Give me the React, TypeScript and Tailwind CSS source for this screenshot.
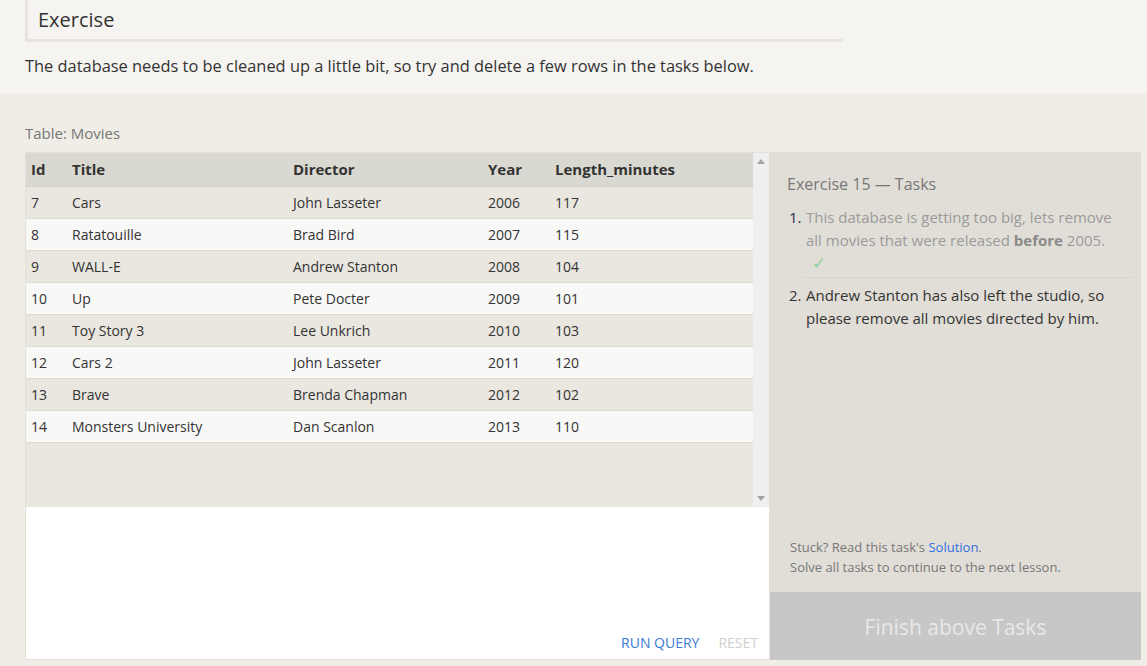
import React from "react";

const movies = [
  { id: 7, title: "Cars", director: "John Lasseter", year: 2006, len: 117 },
  { id: 8, title: "Ratatouille", director: "Brad Bird", year: 2007, len: 115 },
  { id: 9, title: "WALL-E", director: "Andrew Stanton", year: 2008, len: 104 },
  { id: 10, title: "Up", director: "Pete Docter", year: 2009, len: 101 },
  { id: 11, title: "Toy Story 3", director: "Lee Unkrich", year: 2010, len: 103 },
  { id: 12, title: "Cars 2", director: "John Lasseter", year: 2011, len: 120 },
  { id: 13, title: "Brave", director: "Brenda Chapman", year: 2012, len: 102 },
  { id: 14, title: "Monsters University", director: "Dan Scanlon", year: 2013, len: 110 },
];

const cols = "grid grid-cols-[40px_221px_195px_67px_1fr]";

export default function App() {
  return (
    <div className="w-[1147px] h-[666px] overflow-hidden bg-[#efede6] font-['Open_Sans',sans-serif] text-[#333]">
      {/* intro */}
      <div className="bg-[#f5f4f0] h-[94px] px-[25px]">
        <div className="w-[818px] h-[42px] border-l-[3px] border-b-[3px] border-[#e6e4dd] pl-[10px] pt-[6px] text-[20px] leading-[28px]">
          Exercise
        </div>
        <p className="mt-[12px] text-[16.4px] leading-[24px]">
          The database needs to be cleaned up a little bit, so try and delete a few rows in the tasks below.
        </p>
      </div>

      <div className="pl-[25px] pr-[6px] pt-[28px]">
        <div className="text-[15px] leading-[22px] text-[#777] h-[30px]">Table: Movies</div>

        <div className="flex h-[508px]">
          {/* table + editor */}
          <div className="w-[745px] shrink-0 flex flex-col bg-white border border-[#e3e0d8]">
            <div className="flex h-[354px] bg-[#e9e7e0]">
              <div className="flex-1 text-[14px]">
                <div className={`${cols} h-[34px] items-center bg-[#dad9d1] font-bold text-[15px] border-b border-[#d5d2ca]`}>
                  <div className="pl-[5px]">Id</div>
                  <div className="pl-[6px]">Title</div>
                  <div className="pl-[6px]">Director</div>
                  <div className="pl-[6px]">Year</div>
                  <div className="pl-[6px]">Length_minutes</div>
                </div>
                {movies.map((m, i) => (
                  <div
                    key={m.id}
                    className={`${cols} h-[32px] items-center border-b border-[#dedbd3] ${i % 2 ? "bg-[#f8f8f7]" : "bg-[#e9e7e0]"}`}
                  >
                    <div className="pl-[5px]">{m.id}</div>
                    <div className="pl-[6px]">{m.title}</div>
                    <div className="pl-[6px]">{m.director}</div>
                    <div className="pl-[6px]">{m.year}</div>
                    <div className="pl-[6px]">{m.len}</div>
                  </div>
                ))}
              </div>
              <div className="w-[16px] bg-[#efefef] flex flex-col items-center justify-between py-[6px]">
                <svg width="8" height="5" viewBox="0 0 8 5"><path d="M4 0L8 5H0z" fill="#a3a3a3" /></svg>
                <svg width="8" height="5" viewBox="0 0 8 5"><path d="M0 0H8L4 5z" fill="#a3a3a3" /></svg>
              </div>
            </div>
            <div className="flex-1 flex items-end justify-end gap-[19px] pr-[11px] pb-[6px] text-[14px] leading-[20px]">
              <span className="text-[#3b7bd4]">RUN QUERY</span>
              <span className="text-[#cfcfcf]">RESET</span>
            </div>
          </div>

          {/* tasks */}
          <div className="w-[371px] shrink-0 bg-[#e1ded7] flex flex-col">
            <div className="flex-1 pl-[17px] pr-[8px] pt-[21px]">
              <div className="text-[16px] leading-[22px] text-[#777]">Exercise 15 — Tasks</div>
              <ol className="mt-[11px] text-[15px] leading-[23px]">
                <li className="flex pb-[3px] border-b border-[#d5d2ca] ml-[16px]">
                  <span className="w-[14px] -ml-[14px] text-[#2b2b5a] shrink-0">1.</span>
                  <div className="pl-[3px] pr-[12px] text-[#9b9b9b]">
                    <p>
                      This database is getting too big, lets remove all movies that were released{" "}
                      <b className="text-[#8a8a8a]">before</b> 2005.
                    </p>
                    <p className="pl-[6px] text-[17px] leading-[22px] text-[#8fcf98]">✓</p>
                  </div>
                </li>
                <li className="flex pt-[6px] ml-[16px]">
                  <span className="w-[14px] -ml-[14px] shrink-0">2.</span>
                  <p className="pl-[3px] pr-[12px]">
                    Andrew Stanton has also left the studio, so please remove all movies directed by him.
                  </p>
                </li>
              </ol>
            </div>
            <div className="pl-[20px] pb-[15px] text-[13px] leading-[20px] text-[#777]">
              <p>
                Stuck? Read this task's <span className="text-[#2f6fe0]">Solution</span>.
              </p>
              <p>Solve all tasks to continue to the next lesson.</p>
            </div>
            <div className="h-[68px] pt-[4px] bg-[#c7c7c7] flex items-center justify-center text-[21px] text-[#e8e8e8]">
              Finish above Tasks
            </div>
          </div>
        </div>
      </div>
    </div>
  );
}
